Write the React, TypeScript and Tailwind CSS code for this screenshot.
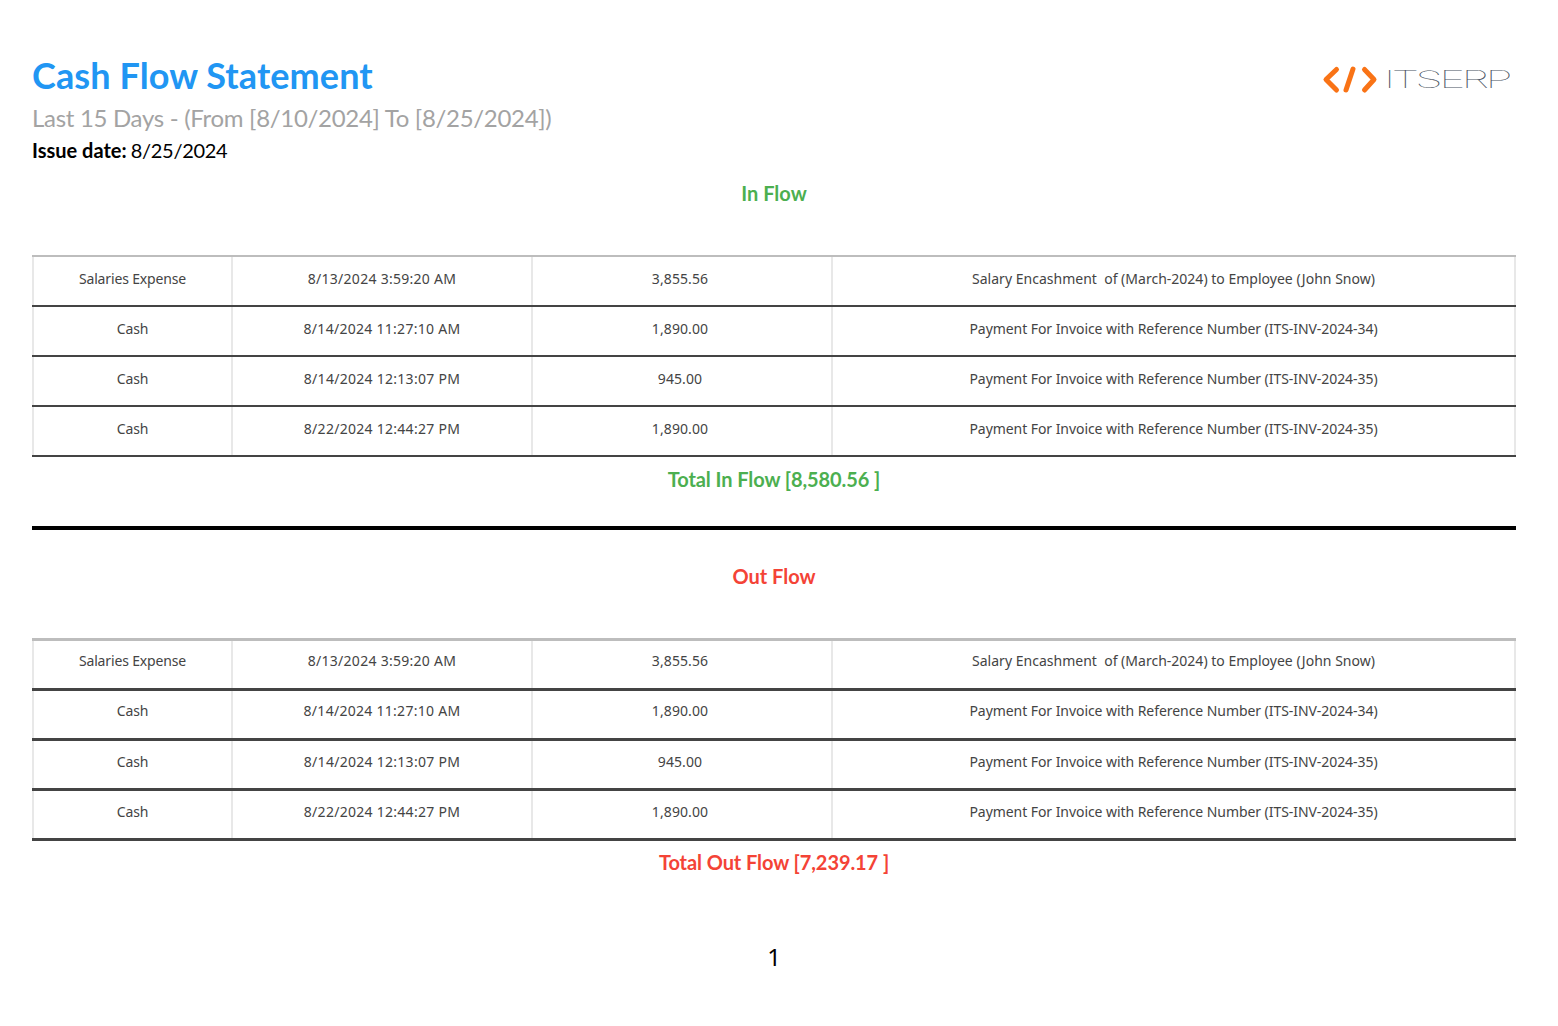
const rows = [
  ["Salaries Expense", "8/13/2024 3:59:20 AM", "3,855.56", "Salary Encashment\u00a0 of (March-2024) to Employee (John Snow)"],
  ["Cash", "8/14/2024 11:27:10 AM", "1,890.00", "Payment For Invoice with Reference Number (ITS-INV-2024-34)"],
  ["Cash", "8/14/2024 12:13:07 PM", "945.00", "Payment For Invoice with Reference Number (ITS-INV-2024-35)"],
  ["Cash", "8/22/2024 12:44:27 PM", "1,890.00", "Payment For Invoice with Reference Number (ITS-INV-2024-35)"],
];

const colClass = [
  "tracking-[-0.15px] border-l-2",
  "tracking-[0.28px] border-l-2",
  "tracking-[0.1px] border-l-2 pr-[4px]",
  "border-l-2 border-r-2",
];

function FlowTable({ thick }: { thick?: boolean }) {
  return (
    <div className={thick ? "border-t-[3px] border-[#bdbdbd]" : "border-t-2 border-[#bdbdbd]"}>
      {rows.map((row, i) => (
        <div
          key={i}
          className={
            "grid grid-cols-[199px_300px_300px_685px] h-[50px] text-[14px] leading-5 text-[#444] font-['Noto_Sans',sans-serif] " +
            (thick ? "border-b-[3px] border-[#444]" : "border-b-2 border-[#444]")
          }
        >
          {row.map((cell, j) => (
            <div
              key={j}
              className={
                "flex items-center justify-center border-[#e8e8e8] " +
                colClass[j] +
                (j === 3 ? (i === 0 ? " tracking-[0.01px]" : " tracking-[-0.06px]") : "") +
                (thick ? (i < 2 ? " pb-[7px]" : " pb-[5px]") : " pb-[4px]")
              }
            >
              {cell}
            </div>
          ))}
        </div>
      ))}
    </div>
  );
}

function Logo() {
  return (
    <svg width="190" height="34" viewBox="0 0 190 34">
      <g fill="none" stroke="#f97316" strokeWidth="5" strokeLinecap="round" strokeLinejoin="round">
        <path d="M16.5 8.5 L6 18.5 L16.5 29" />
        <path d="M33 8 L26 29" />
        <path d="M44.5 8.5 L54 18.5 L44.5 29" />
      </g>
      <text
        x="64"
        y="27"
        textLength="125"
        lengthAdjust="spacingAndGlyphs"
        letterSpacing="-2"
        fontFamily="Inter, sans-serif"
        fontWeight="100"
        fontSize="24"
        fill="#4b5563"
      >
        ITSERP
      </text>
    </svg>
  );
}

export default function App() {
  return (
    <div className="min-h-[1026px] bg-white pl-8 pr-[42px] pt-[53px] font-['Lato',sans-serif]">
      <div className="flex items-start justify-between">
        <div>
          <h1 className="text-[36px] leading-[45px] font-bold text-[#2196f3] tracking-[0.1px]">Cash Flow Statement</h1>
          <p className="mt-[1px] text-[24px] leading-[38px] text-[#a3a3a3] tracking-[-0.3px]">
            Last 15 Days - (From [8/10/2024] To [8/25/2024])
          </p>
          <p className="text-[20px] leading-[27px] text-black">
            <span className="font-bold">Issue date:</span> <span className="tracking-[-0.3px] -ml-[1px]">8/25/2024</span>
          </p>
        </div>
        <div className="pt-[8px] mr-[6px]">
          <Logo />
        </div>
      </div>

      <h2 className="mt-[15px] text-center text-[20px] leading-7 font-bold text-[#4caf50]">In Flow</h2>
      <div className="mt-[48px]">
        <FlowTable />
      </div>
      <p className="mt-[8px] text-center text-[20px] leading-7 font-bold text-[#4caf50] tracking-[-0.08px]">
        Total In Flow [8,580.56 ]
      </p>
      <div className="mt-[33px] h-1 bg-black" />

      <h2 className="mt-[32px] text-center text-[20px] leading-7 font-bold text-[#f44336]">Out Flow</h2>
      <div className="mt-[48px]">
        <FlowTable thick />
      </div>
      <p className="mt-[7px] text-center text-[20px] leading-7 font-bold text-[#f44336] tracking-[-0.08px]">
        Total Out Flow [7,239.17 ]
      </p>

      <p className="mt-[65px] text-center text-[24px] leading-8 text-black font-['Noto_Sans',sans-serif]">1</p>
    </div>
  );
}
